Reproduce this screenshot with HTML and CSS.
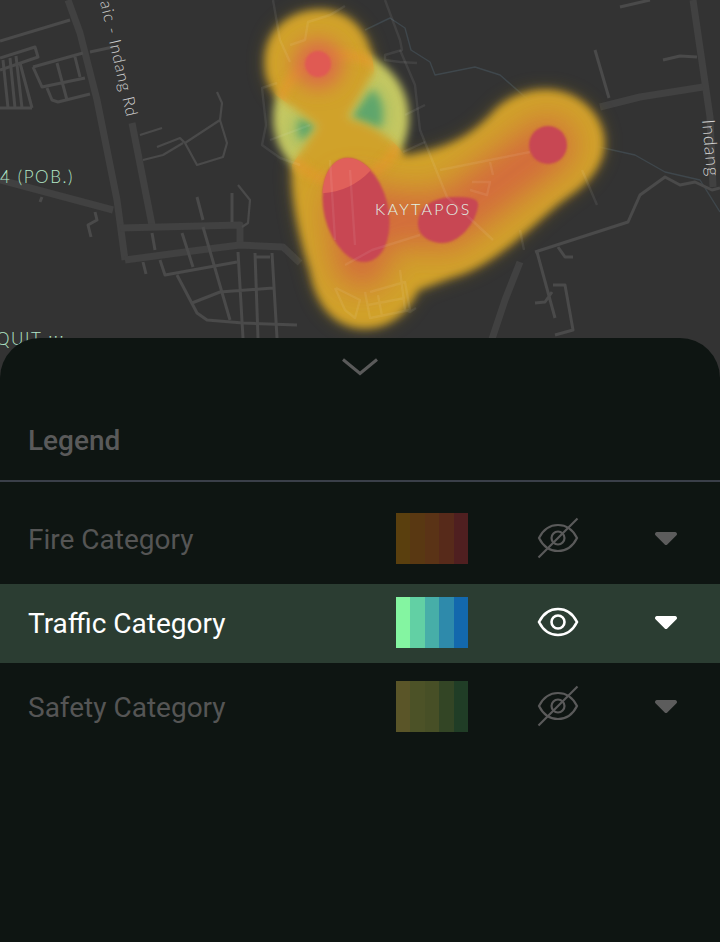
FILE: index.html
```html
<!DOCTYPE html>
<html lang="en">
<head>
    <meta charset="UTF-8">
    <meta name="viewport" content="width=device-width, initial-scale=1.0">
    <title>Legend</title>
    <link rel="stylesheet" href="styles.css">
</head>
<body>
    <div class="map">
        <svg class="map-art" width="720" height="400" viewBox="0 0 720 400">
            <defs>
                <filter id="glow" filterUnits="userSpaceOnUse" x="0" y="0" width="720" height="400"><feGaussianBlur stdDeviation="4"/></filter>
                <filter id="halo" filterUnits="userSpaceOnUse" x="0" y="0" width="720" height="400"><feGaussianBlur stdDeviation="9"/></filter>
                <filter id="soft" filterUnits="userSpaceOnUse" x="0" y="0" width="720" height="400"><feGaussianBlur stdDeviation="10"/></filter>
                <filter id="wide" filterUnits="userSpaceOnUse" x="0" y="0" width="720" height="400"><feGaussianBlur stdDeviation="16"/></filter>
                <filter id="edge" filterUnits="userSpaceOnUse" x="0" y="0" width="720" height="400"><feGaussianBlur stdDeviation="1"/></filter>
                <clipPath id="overlap"><circle cx="341" cy="118" r="69"/></clipPath>
                <clipPath id="body-shape"><path d="M265 62C265 28 292 10 320 10 350 10 372 32 374 72L347 118C365 122 392 135 405 156 440 150 470 140 495 110 520 85 570 80 595 115 615 145 600 175 570 195 540 215 500 265 450 278L418 290C405 320 380 330 360 328 330 325 315 300 310 270 300 240 291 200 292 165L318 126 276 95C268 85 265 75 265 62Z"/></clipPath>
            </defs>

            <!-- river -->
            <path class="river" d="M365 30L390 18 405 28 411 50 430 62 435 75 475 67 500 75 540 110 590 145 635 155 665 172 700 180 720 212"/>

            <!-- main roads -->
            <g class="road-wide">
                <path d="M68 0L80 33 97 100 117 200 125 260"/>
                <path d="M132 123L152 225"/>
                <path d="M0 180L113 210"/>
                <path d="M120 228L240 225 240 245"/>
                <path d="M125 260L200 250 240 245 283 247 300 263"/>
                <path d="M693 0L710 117 713 187"/>
                <path d="M600 107L640 97 703 87"/>
                <path d="M490 345L505 300 520 262"/>
            </g>

            <!-- side streets -->
            <g class="road">
                <path d="M0 41L70 20M90 52L113 47"/>
                <path d="M0 58L35 47 38 57 0 70"/>
                <path d="M3 60L8 108M10 58L15 108M16 56L22 108M20 63L32 108M0 108L32 108"/>
                <path d="M33 67L83 53M33 67L42 87 85 78M47 88L52 100 58 102 90 94M57 63L67 100M75 57L80 77"/>
                <path d="M197 197L203 220M232 193L232 222M152 233L155 250M182 233L193 267M203 227L230 320M143 262L146 274"/>
                <path d="M95 212L97 220 88 225 91 237M40 202L42 197"/>
                <path d="M160 260L165 275 237 262M177 275L197 313 207 320 243 323 297 325"/>
                <path d="M192 303L220 292 273 288M238 252L243 338M255 253L258 338M272 253L277 338M255 257L270 257"/>
                <path d="M595 50L609 98M663 60L680 56 697 57M620 7L650 0"/>
                <path d="M535 252L628 222 640 195 665 177 680 185 695 182 712 190 720 188"/>
                <path d="M537 252L555 318M553 285L565 285 573 330 555 335M558 247L565 257 573 257M535 303L545 302 552 292"/>
            </g>
            <g class="road road-thin">
                <path d="M217 92L222 103 220 120 185 143 197 165 223 157 227 143 220 120"/>
                <path d="M140 135L162 128M157 147L180 138 185 143M143 160L163 155 183 143"/>
                <path d="M238 185L250 200 248 223 242 227"/>
            </g>

            <!-- heat -->
            <g class="heat">
                <path class="heat-halo" d="M265 62C265 28 292 10 320 10 350 10 372 32 374 72L347 118C365 122 392 135 405 156 440 150 470 140 495 110 520 85 570 80 595 115 615 145 600 175 570 195 540 215 500 265 450 278L418 290C405 320 380 330 360 328 330 325 315 300 310 270 300 240 291 200 292 165L318 126 276 95C268 85 265 75 265 62Z" filter="url(#halo)"/>
                <circle class="heat-green" cx="341" cy="118" r="68" filter="url(#glow)"/>
                <g clip-path="url(#overlap)">
                    <path class="heat-leaf-soft" d="M349 118L372 86C384 92 388 118 381 131Z" filter="url(#soft)"/>
                    <path class="heat-leaf-soft" d="M319 126L298 116 290 136 302 146Z" filter="url(#soft)"/>
                </g>
                <path class="heat-leaf" d="M351 118L372 90C382 96 385 116 380 128Z" filter="url(#glow)"/>
                <path class="heat-leaf" d="M317 126L299 118 298 134 303 140Z" filter="url(#glow)"/>
                <path class="heat-gold" d="M265 62C265 28 292 10 320 10 350 10 372 32 374 72L347 118C365 122 392 135 405 156 440 150 470 140 495 110 520 85 570 80 595 115 615 145 600 175 570 195 540 215 500 265 450 278L418 290C405 320 380 330 360 328 330 325 315 300 310 270 300 240 291 200 292 165L318 126 276 95C268 85 265 75 265 62Z" filter="url(#glow)"/>
                <g clip-path="url(#body-shape)">
                    <circle class="heat-rim" cx="341" cy="118" r="63" filter="url(#glow)"/>
                </g>
                <path class="heat-orange" d="M356 205L362 262M356 215L445 222 548 145" filter="url(#wide)"/>
                <circle class="heat-coral" cx="318" cy="64" r="24" filter="url(#soft)"/>
                <ellipse class="heat-red" cx="356" cy="210" rx="32" ry="53" transform="rotate(-14 356 210)" filter="url(#edge)"/>
                <ellipse class="heat-red-light" cx="356" cy="210" rx="32" ry="53" transform="rotate(-14 356 210)" clip-path="url(#overlap)"/>
                <path class="heat-red" d="M418 224C418 208 432 197 455 197 470 197 480 198 478 207 474 226 458 243 443 243 430 243 418 236 418 224Z" filter="url(#edge)"/>
                <circle class="heat-red" cx="548" cy="145" r="19" filter="url(#edge)"/>
                <circle class="heat-top" cx="318" cy="64" r="13" filter="url(#edge)"/>
            </g>

            <!-- streets showing through the heat -->
            <g class="road road-over">
                <path d="M273 0L280 40 290 62M290 45L305 40 308 22 330 15 345 6"/>
                <path d="M277 83L262 88 266 125 262 145 280 158 300 165M270 140L310 125"/>
                <path d="M385 0L400 40 402 50 385 55 385 60 400 62 417 63M405 115L425 105M403 152L425 142"/>
                <path d="M400 50L415 85 420 130 447 197 493 240"/>
                <path d="M345 265L372 250 420 235M330 160L335 240M350 170L355 245"/>
                <path d="M440 170L480 162 530 152M490 162L493 175M472 182L490 182 487 195 470 190"/>
                <path d="M335 288L345 310 355 318 360 300 336 288M370 292L405 282 410 310 370 318 365 292M368 305L405 298M378 295L382 316M400 270L405 310 410 312 416 308"/>
                <path d="M582 170L597 205M520 230L524 250"/>
            </g>

            <!-- labels -->
            <text class="label-road" transform="translate(100 2) rotate(77)">aic - Indang Rd</text>
            <text class="label-road label-road-far" transform="translate(702 120) rotate(85)">Indang</text>
            <text class="label-place" x="0" y="183">4 (POB.)</text>
            <text class="label-place" x="-4" y="345">QUIT :::</text>
            <text class="label-town" x="375" y="215">KAYTAPOS</text>
        </svg>
    </div>

    <div class="sheet">
        <div class="sheet-handle">
            <svg width="36" height="18" viewBox="0 0 36 18"><path d="M1 1.500L18 15.500 35 1.500"/></svg>
        </div>
        <h2 class="sheet-title">Legend</h2>
        <div class="legend">
            <div class="legend-row">
                <span class="legend-name">Fire Category</span>
                <span class="swatch swatch-fire"></span>
                <svg class="eye" width="42" height="42" viewBox="0 0 42 42">
                    <path d="M2 21C6 13 13 8 21 8S36 13 40 21C36 29 29 34 21 34S6 29 2 21Z"/>
                    <circle cx="21" cy="21" r="6.500"/>
                    <path d="M1.500 40.500L40.500 1.500"/>
                </svg>
                <svg class="caret" width="22" height="13" viewBox="0 0 22 13"><path d="M2 0H20A2 2 0 0 1 21.500 3.300L12.500 12.300A2 2 0 0 1 9.500 12.300L.5 3.300A2 2 0 0 1 2 0Z"/></svg>
            </div>
            <div class="legend-row legend-row-active">
                <span class="legend-name">Traffic Category</span>
                <span class="swatch swatch-traffic"></span>
                <svg class="eye" width="42" height="42" viewBox="0 0 42 42">
                    <path d="M2 21C6 13 13 8 21 8S36 13 40 21C36 29 29 34 21 34S6 29 2 21Z"/>
                    <circle cx="21" cy="21" r="6.500"/>
                </svg>
                <svg class="caret" width="22" height="13" viewBox="0 0 22 13"><path d="M2 0H20A2 2 0 0 1 21.500 3.300L12.500 12.300A2 2 0 0 1 9.500 12.300L.5 3.300A2 2 0 0 1 2 0Z"/></svg>
            </div>
            <div class="legend-row">
                <span class="legend-name">Safety Category</span>
                <span class="swatch swatch-safety"></span>
                <svg class="eye" width="42" height="42" viewBox="0 0 42 42">
                    <path d="M2 21C6 13 13 8 21 8S36 13 40 21C36 29 29 34 21 34S6 29 2 21Z"/>
                    <circle cx="21" cy="21" r="6.500"/>
                    <path d="M1.500 40.500L40.500 1.500"/>
                </svg>
                <svg class="caret" width="22" height="13" viewBox="0 0 22 13"><path d="M2 0H20A2 2 0 0 1 21.500 3.300L12.500 12.300A2 2 0 0 1 9.500 12.300L.5 3.300A2 2 0 0 1 2 0Z"/></svg>
            </div>
        </div>
    </div>
</body>
</html>
```

FILE: styles.css
```css
body {
    margin: 0;
    width: 720px;
    height: 942px;
    position: relative;
    overflow: hidden;
    font-family: Roboto, "Liberation Sans", sans-serif;
    background-color: #0e1512;
}

.map {
    height: 400px;
    background-color: #333333;
}

.map-art {
    display: block;
}

.road-wide path,
.road path,
.river {
    fill: none;
    stroke-linejoin: round;
}

.road-wide path {
    stroke: #414141;
    stroke-width: 7;
}

.road path {
    stroke: #4a4a4a;
    stroke-width: 3;
}

.road-thin path {
    stroke-width: 2.200;
}

.road-over path {
    stroke: rgba(255, 255, 255, 0.07);
    stroke-width: 2.400;
}

.river {
    stroke: #3f474c;
    stroke-width: 1.400;
}

.heat-green {
    fill: #c6c862;
}

.heat-leaf {
    fill: #5fa66c;
}

.heat-leaf-soft {
    fill: #7fb368;
    opacity: 0.7;
}

.heat-halo {
    fill: #8a7122;
    opacity: 0.55;
}

.heat-gold {
    fill: #d0a22c;
}

.heat-rim {
    fill: none;
    stroke: #e8992f;
    stroke-width: 8;
    opacity: 0.7;
}

.heat-orange {
    fill: none;
    stroke: #d4623f;
    stroke-width: 52;
    stroke-linejoin: round;
    stroke-linecap: round;
    opacity: 0.85;
}

.heat-coral {
    fill: #dc6a48;
}

.heat-red {
    fill: #c84652;
}

.heat-red-light {
    fill: #e0605a;
}

.heat-top {
    fill: #e05a52;
}

.label-road {
    font-family: Lato, sans-serif;
    font-size: 16.500px;
    font-weight: 300;
    letter-spacing: 0.900px;
    fill: #d0d0d0;
}

.label-road-far {
    font-size: 18px;
}

.label-place {
    font-family: Lato, sans-serif;
    font-size: 17px;
    font-weight: 300;
    letter-spacing: 1.600px;
    fill: #b4e8c8;
}

.label-town {
    font-family: Lato, sans-serif;
    font-size: 16px;
    font-weight: 300;
    letter-spacing: 2.300px;
    fill: #e0f4e8;
}

.sheet {
    position: absolute;
    top: 338px;
    left: 0;
    right: 0;
    bottom: 0;
    background-color: #0e1512;
    border-radius: 40px 40px 0 0;
}

.sheet-handle {
    display: flex;
    justify-content: center;
    padding-top: 20px;
    height: 18px;
}

.sheet-handle path {
    fill: none;
    stroke: #5a5a5a;
    stroke-width: 3;
}

.sheet-title {
    margin: 0;
    padding: 49px 28px 24px;
    height: 31px;
    line-height: 31px;
    font-size: 28px;
    font-weight: 500;
    color: #5a5a5a;
    border-bottom: 2px solid #3a3f49;
}

.legend {
    display: flex;
    flex-direction: column;
    gap: 5px;
    margin-top: 18px;
}

.legend-row {
    display: flex;
    align-items: flex-start;
    height: 66px;
    padding: 13px 43px 0 28px;
    color: #555555;
}

.legend-row-active {
    color: #ffffff;
    background-color: #2b3d32;
}

.legend-name {
    flex: 1;
    font-size: 28px;
    line-height: 54px;
}

.swatch {
    width: 72px;
    height: 51px;
}

.swatch-fire {
    background: linear-gradient(90deg, #5a3f0e 0 14px, #593812 14px 29px, #5a3316 29px 43px, #572a1a 43px 58px, #4f1f20 58px);
}

.swatch-traffic {
    background: linear-gradient(90deg, #84f5a1 0 14px, #62d0a4 14px 29px, #47aea8 29px 43px, #2e8aab 43px 58px, #1368ad 58px);
}

.swatch-safety {
    background: linear-gradient(90deg, #5a5528 0 14px, #4c5227 14px 29px, #474f26 29px 43px, #334525 43px 58px, #203d26 58px);
}

.eye {
    margin: 4px 0 0 69px;
    fill: none;
    stroke: #5a5a5a;
    stroke-width: 2.200;
}

.legend-row-active .eye {
    stroke: #ffffff;
    stroke-width: 2.600;
}

.caret {
    margin: 19px 0 0 76px;
    fill: #5c5c5c;
}

.legend-row-active .caret {
    fill: #ffffff;
}
```
